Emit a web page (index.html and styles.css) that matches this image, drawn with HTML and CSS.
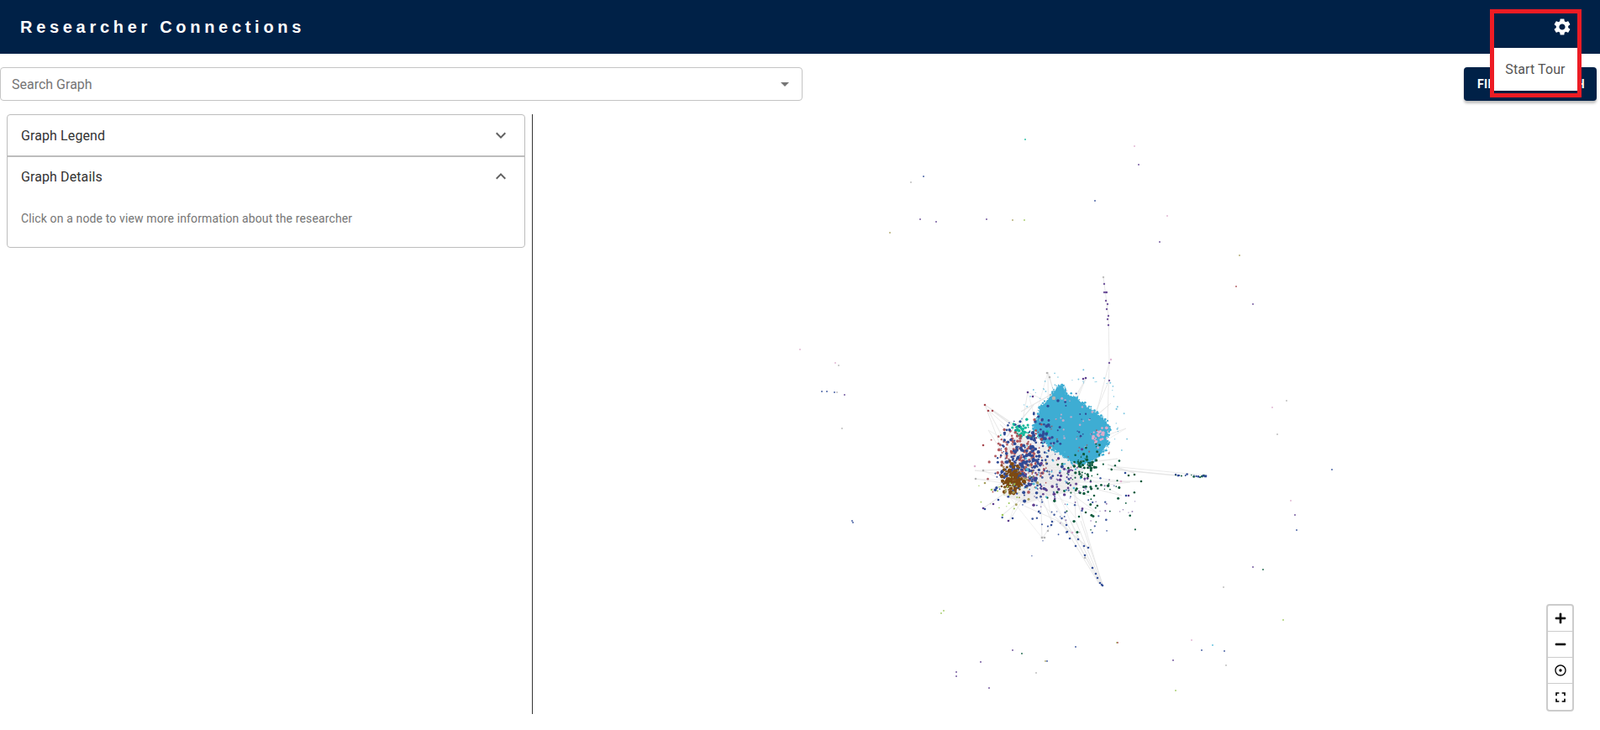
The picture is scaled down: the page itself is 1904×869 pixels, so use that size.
FILE: index.html
```html
<!DOCTYPE html>
<html lang="en">
<head>
    <meta charset="UTF-8">
    <title>Researcher Connections</title>
    <link rel="stylesheet" href="styles.css">
</head>
<body>
    <header class="topbar">
        <div class="title">Researcher Connections</div>
        <svg class="gear" viewBox="0 0 24 24"><path d="M19.14 12.94c.04-.3.06-.61.06-.94 0-.32-.02-.64-.07-.94l2.03-1.58c.18-.14.23-.41.12-.61l-1.92-3.32c-.12-.22-.37-.29-.59-.22l-2.39.96c-.5-.38-1.03-.7-1.62-.94l-.36-2.54c-.04-.24-.24-.41-.48-.41h-3.84c-.24 0-.43.17-.47.41l-.36 2.54c-.59.24-1.13.57-1.62.94l-2.39-.96c-.22-.08-.47 0-.59.22L2.74 8.87c-.12.21-.08.47.12.61l2.03 1.58c-.05.3-.09.63-.09.94s.02.64.07.94l-2.03 1.58c-.18.14-.23.41-.12.61l1.92 3.32c.12.22.37.29.59.22l2.39-.96c.5.38 1.03.7 1.62.94l.36 2.54c.05.24.24.41.48.41h3.84c.24 0 .44-.17.47-.41l.36-2.54c.59-.24 1.13-.56 1.62-.94l2.39.96c.22.08.47 0 .59-.22l1.92-3.32c.12-.22.07-.47-.12-.61l-2.01-1.58zM12 15.6c-1.98 0-3.6-1.62-3.6-3.6s1.62-3.6 3.6-3.6 3.6 1.62 3.6 3.6-1.62 3.6-3.6 3.6z"/></svg>
    </header>

    <!-- menu + tour highlight sit over the header -->
    <div class="menu">Start Tour</div>
    <div class="tour-box"></div>

    <div class="toolbar">
        <div class="search">
            <span>Search Graph</span>
            <svg viewBox="0 0 24 24"><path d="M7 10l5 5 5-5z"/></svg>
        </div>
        <button class="filter-btn">FILTER THE GRAPH</button>
    </div>

    <div class="content">
        <div class="sidebar">
            <div class="accordion">
                <div class="acc-head">
                    <span>Graph Legend</span>
                    <svg viewBox="0 0 24 24"><path d="M16.59 8.59 12 13.17 7.41 8.59 6 10l6 6 6-6z"/></svg>
                </div>
                <div class="acc-head acc-open">
                    <span>Graph Details</span>
                    <svg viewBox="0 0 24 24"><path d="m12 8-6 6 1.41 1.41L12 10.83l4.59 4.58L18 14z"/></svg>
                </div>
                <div class="acc-body">Click on a node to view more information about the researcher</div>
            </div>
        </div>

        <div class="graph">
            <canvas id="graph-canvas"></canvas>
            <div class="controls">
                <div class="ctrl"><svg class="big bold" viewBox="0 0 24 24"><path d="M19 13h-6v6h-2v-6H5v-2h6V5h2v6h6z"/></svg></div>
                <div class="ctrl"><svg class="big bold" viewBox="0 0 24 24"><path d="M19 13H5v-2h14z"/></svg></div>
                <div class="ctrl"><svg viewBox="0 0 24 24"><path d="M12 9.500a2.500 2.500 0 1 0 0 5 2.500 2.500 0 0 0 0-5zM12 2C6.480 2 2 6.480 2 12s4.480 10 10 10 10-4.480 10-10S17.520 2 12 2zm0 18c-4.420 0-8-3.580-8-8s3.580-8 8-8 8 3.580 8 8-3.580 8-8 8z"/></svg></div>
                <div class="ctrl"><svg class="big" viewBox="0 0 24 24"><path d="M7 14H5v5h5v-2H7v-3zm-2-4h2V7h3V5H5v5zm12 7h-3v2h5v-5h-2v3zM14 5v2h3v3h2V5h-5z"/></svg></div>
            </div>
        </div>
    </div>

    <script src="graph.js"></script>
</body>
</html>
```

FILE: styles.css
```css
* {
    box-sizing: border-box;
}

body {
    margin: 0;
    height: 869px;
    overflow: hidden;
    background: white;
    font-family: Roboto, "Liberation Sans", sans-serif;
    color: #212121;
}

.topbar {
    display: flex;
    justify-content: space-between;
    align-items: center;
    height: 64px;
    padding: 0 33px 0 24px;
    background: #002147;
}

.title {
    font-family: "Liberation Sans", Arial, sans-serif;
    font-size: 20px;
    font-weight: bold;
    letter-spacing: 4.7px;
    color: white;
}

.gear {
    width: 24px;
    height: 24px;
    fill: white;
}

.menu {
    position: absolute;
    top: 57px;
    right: 27px;
    z-index: 2;
    width: 100px;
    height: 51px;
    line-height: 51px;
    text-align: center;
    font-size: 16px;
    letter-spacing: 0.1px;
    color: #555;
    background: white;
    box-shadow: 0 2px 6px rgba(0,0,0,0.2);
}

.tour-box {
    position: absolute;
    top: 11px;
    right: 22px;
    z-index: 3;
    width: 109px;
    height: 105px;
    border: 5px solid #ed1c24;
}

.toolbar {
    display: flex;
    justify-content: space-between;
    align-items: center;
    padding: 16px 4px 0 0;
}

.search {
    display: flex;
    justify-content: space-between;
    align-items: center;
    width: 955px;
    height: 40px;
    padding: 0 8px 0 13px;
    border: 1px solid #c4c4c4;
    border-radius: 4px;
    font-size: 16px;
    color: #757575;
}

.search svg {
    width: 24px;
    height: 24px;
    fill: #757575;
}

.filter-btn {
    width: 158px;
    height: 40px;
    padding: 0 0 0 2px;
    border: none;
    border-radius: 4px;
    background: #002147;
    color: white;
    font-family: Roboto, sans-serif;
    font-size: 14px;
    font-weight: bold;
    letter-spacing: 0.3px;
    box-shadow: 0 3px 3px rgba(0,0,0,0.25);
}

.content {
    display: flex;
    height: 714px;
    margin-top: 16px;
}

.sidebar {
    width: 634px;
    padding: 0 8px;
    border-right: 1px solid #333;
}

.accordion {
    border: 1px solid #bdbdbd;
    border-radius: 4px;
}

.acc-head {
    display: flex;
    justify-content: space-between;
    align-items: center;
    height: 48px;
    padding: 0 16px;
    font-size: 16px;
    letter-spacing: 0.1px;
    color: #333;
}

.acc-head svg {
    width: 24px;
    height: 24px;
    fill: #616161;
}

.acc-open {
    border-top: 2px solid #bdbdbd;
}

.acc-body {
    padding: 17px 16px 24px;
    font-size: 14px;
    line-height: 20px;
    letter-spacing: 0.13px;
    color: #757575;
}

.graph {
    position: relative;
    flex: 1;
}

#graph-canvas {
    display: block;
    width: 100%;
    height: 100%;
}

.controls {
    position: absolute;
    right: 31px;
    bottom: 3px;
    width: 33px;
    border: 2px solid #ccc;
    border-radius: 4px;
    background: white;
}

.ctrl {
    display: flex;
    justify-content: center;
    align-items: center;
    height: 31px;
    border-bottom: 1px solid #ccc;
}

.ctrl:last-child {
    border-bottom: none;
}

.ctrl svg {
    width: 16px;
    height: 16px;
}

.ctrl svg.big {
    width: 20px;
    height: 20px;
}

.ctrl svg.bold {
    stroke: black;
    stroke-width: 1.1;
}
```

FILE: graph.js
```js
// network picture, coordinates are page pixels
const canvas = document.getElementById('graph-canvas');
const box = canvas.getBoundingClientRect();
canvas.width = box.width;
canvas.height = box.height;
const ctx = canvas.getContext('2d');
ctx.translate(-box.left, -box.top);

let seed = 1234;
function rnd() {
    seed = (seed * 16807) % 2147483647;
    return seed / 2147483647;
}
function gauss() {
    return rnd() + rnd() + rnd() - 1.5;
}

const BLUE = '#3eadd3', NAVY = '#2f4b96', RED = '#a8484f', BROWN = '#7d4a12',
      TEAL = '#12b89a', GREEN = '#0c5a3c', PURPLE = '#5e3f8f', PINK = '#dcaccc',
      GREY = '#b4b4b4', LIME = '#9cc85a', CYAN = '#4bb8d8', OLIVE = '#a8a060';

function dot(x, y, r, color, alpha) {
    ctx.globalAlpha = alpha === undefined ? 1 : alpha;
    ctx.fillStyle = color;
    ctx.beginPath();
    ctx.arc(x, y, r, 0, Math.PI * 2);
    ctx.fill();
    ctx.globalAlpha = 1;
}

function line(x1, y1, x2, y2, w) {
    ctx.strokeStyle = '#e6e6e6';
    ctx.lineWidth = w || 0.9;
    ctx.beginPath();
    ctx.moveTo(x1, y1);
    ctx.lineTo(x2, y2);
    ctx.stroke();
}

function cluster(cx, cy, sx, sy, n, color, rMin, rMax, alpha) {
    for (let i = 0; i < n; i++) {
        dot(cx + gauss() * sx, cy + gauss() * sy, rMin + rnd() * (rMax - rMin), color, alpha);
    }
}

// pale mass of edges below the blob
ctx.fillStyle = '#efeeee';
ctx.beginPath();
[[1235, 525], [1270, 545], [1290, 560], [1280, 585], [1250, 590], [1220, 600], [1195, 590], [1195, 540], [1215, 510]]
    .forEach((p, i) => i ? ctx.lineTo(p[0], p[1]) : ctx.moveTo(p[0], p[1]));
ctx.closePath();
ctx.fill();

// edges out to the loose nodes
const hub = [1235, 565];
[[1172, 482], [1177, 489], [1176, 512], [1160, 570], [1170, 560], [1170, 605], [1193, 613], [1201, 620],
 [1180, 583], [1240, 640], [1247, 443], [1292, 451], [1223, 467], [1270, 625], [1252, 622], [1283, 642],
 [1297, 590], [1345, 574], [1358, 573], [1335, 590], [1312, 697], [1305, 610], [1280, 617], [1322, 480],
 [1340, 510], [1330, 546], [1190, 505], [1160, 560]
].forEach(p => {
    line(hub[0] + gauss() * 40, hub[1] + gauss() * 30, p[0], p[1]);
    line(hub[0] + gauss() * 30, hub[1] + gauss() * 25, p[0], p[1], 0.6);
});
line(1181, 489, 1216, 515, 1.2);
line(1172, 482, 1206, 505, 1.2);
line(1247, 443, 1255, 470, 1.2);
line(1223, 467, 1250, 480, 0.8);
line(1292, 451, 1280, 480, 0.8);
line(1230, 482, 1198, 520, 1.2);
line(1250, 470, 1215, 490, 1.2);

// arms
line(1313, 330, 1319, 376);
line(1319, 376, 1320, 432);
line(1320, 432, 1305, 490);
line(1320, 432, 1318, 500);
line(1320, 452, 1300, 500);
line(1322, 555, 1435, 566, 0.8);
line(1318, 558, 1400, 566, 1.6);
line(1318, 553, 1350, 563, 1.6);
for (let i = 0; i < 5; i++) {
    line(1262 + i * 6, 620, 1308 + i, 695, 1);
}
line(1255, 620, 1240, 641);
line(1258, 620, 1295, 652, 1.2);

// main blue blob
const blob = [[1258, 462], [1263, 458], [1266, 462], [1268, 470], [1280, 473], [1292, 484], [1300, 489], [1312, 498],
    [1318, 505], [1320, 510], [1316, 522], [1318, 528], [1310, 540], [1300, 548], [1287, 553], [1277, 550],
    [1262, 540], [1248, 530], [1235, 518], [1231, 508], [1236, 495], [1238, 484], [1246, 478], [1252, 470]];
ctx.fillStyle = BLUE;
ctx.beginPath();
blob.forEach((p, i) => i ? ctx.lineTo(p[0], p[1]) : ctx.moveTo(p[0], p[1]));
ctx.closePath();
ctx.fill();
blob.forEach((p, i) => {
    const q = blob[(i + 1) % blob.length];
    const n = Math.ceil(Math.hypot(q[0] - p[0], q[1] - p[1]) * 1.5);
    for (let k = 0; k < n; k++) {
        const t = rnd();
        dot(p[0] + (q[0] - p[0]) * t + gauss() * 3, p[1] + (q[1] - p[1]) * t + gauss() * 3, 0.5 + rnd() * 0.9, BLUE);
    }
});
// stray blue nodes round the rim
for (let i = 0; i < 60; i++) {
    const a = rnd() * 6.283, r = 50 + rnd() * 16;
    const x = 1278 + Math.cos(a) * r, y = 505 + Math.sin(a) * r;
    if (y < 545) dot(x, y, 0.5 + rnd() * 0.6, BLUE, 0.7);
}

// things sitting on top of the blob
cluster(1308, 519, 9, 10, 24, PINK, 0.9, 2);
cluster(1275, 510, 42, 38, 26, PINK, 0.6, 1.6, 0.8);
cluster(1285, 525, 40, 28, 24, RED, 0.5, 1.2, 0.7);
cluster(1270, 500, 36, 40, 20, NAVY, 0.6, 1.7);
cluster(1297, 540, 22, 10, 16, GREEN, 0.6, 1.5);
dot(1259, 477, 1.8, NAVY);
dot(1240, 500, 1.8, NAVY);
dot(1249, 522, 1.7, PURPLE);
dot(1254, 474, 2.2, GREY);

// left side clusters
cluster(1216, 514, 22, 12, 30, TEAL, 0.7, 2);
cluster(1214, 512, 9, 8, 18, TEAL, 0.9, 1.9);
cluster(1237, 510, 12, 22, 24, NAVY, 1, 2.2);
cluster(1214, 545, 30, 34, 190, RED, 0.7, 2, 0.9);
cluster(1220, 545, 34, 38, 190, NAVY, 0.7, 2.1);
cluster(1205, 566, 20, 28, 50, NAVY, 0.8, 2.2);
cluster(1206, 568, 11, 20, 70, BROWN, 1, 2.3);
cluster(1204, 574, 10, 12, 50, BROWN, 1, 2.2);
cluster(1222, 565, 34, 40, 26, OLIVE, 0.7, 1.6);
cluster(1195, 590, 30, 20, 22, LIME, 0.5, 1.1);
cluster(1262, 568, 36, 28, 50, PURPLE, 0.8, 1.9);
cluster(1258, 595, 50, 50, 60, NAVY, 0.6, 1.5, 0.9);
cluster(1300, 580, 44, 44, 70, GREEN, 0.7, 1.7);
cluster(1292, 553, 22, 6, 26, GREEN, 0.9, 1.9);
cluster(1250, 565, 40, 28, 28, CYAN, 0.6, 1.5);
cluster(1295, 590, 50, 44, 26, PURPLE, 0.5, 1.1, 0.7);

// outliers around the core
[[1172, 482, RED], [1176, 489, RED], [1181, 489, RED], [1161, 570, GREY], [1170, 560, GREY],
 [1172, 606, NAVY], [1170, 605, PURPLE], [1200, 620, PURPLE], [1205, 617, NAVY], [1193, 613, LIME],
 [1180, 583, LIME], [1246, 444, GREY], [1249, 449, GREY], [1289, 451, PURPLE], [1292, 450, PURPLE],
 [1223, 467, PURPLE], [1229, 472, PURPLE], [1250, 470, GREY], [1339, 563, NAVY], [1350, 565, GREEN],
 [1343, 566, GREEN], [1358, 573, GREEN], [1343, 590, PURPLE], [1334, 573, PINK], [1340, 590, NAVY],
 [1243, 640, GREY], [1240, 640, GREY], [1284, 615, GREEN], [1292, 610, GREEN], [1302, 590, GREEN],
 [1170, 530, RED], [1160, 555, PINK], [1182, 600, PURPLE], [1188, 595, NAVY], [1172, 575, OLIVE]
].forEach(p => dot(p[0], p[1], 1.3, p[2]));

// top arm
[[1313, 330, GREY], [1314, 338, PURPLE], [1314, 348, PURPLE], [1316, 358, PURPLE], [1317, 348, PURPLE],
 [1316, 348, PURPLE], [1318, 362, PURPLE], [1317, 368, PURPLE], [1318, 380, PURPLE], [1319, 387, PURPLE],
 [1319, 376, PURPLE], [1322, 428, PINK], [1320, 432, PURPLE], [1320, 453, PURPLE]
].forEach(p => dot(p[0], p[1], 1.2, p[2], 0.85));

// right arm
for (let i = 0; i < 22; i++) {
    dot(1398 + rnd() * 38, 566 + gauss() * 2, 0.6 + rnd() * 0.8, i % 3 ? NAVY : GREEN);
}

// bottom arm
[[1252, 621, NAVY], [1251, 625, NAVY], [1269, 625, NAVY], [1270, 633, NAVY], [1273, 641, NAVY], [1283, 642, NAVY],
 [1280, 650, NAVY], [1290, 650, NAVY], [1295, 652, NAVY], [1291, 661, NAVY], [1291, 664, GREY],
 [1300, 676, NAVY], [1304, 683, NAVY], [1306, 688, NAVY], [1309, 694, NAVY], [1311, 696, NAVY], [1312, 697, NAVY],
 [1240, 640, GREY], [1247, 632, GREY], [1276, 634, PINK]
].forEach(p => dot(p[0], p[1], 1.3, p[2], 0.95));

// far away single nodes, around the page
[[1220, 166, TEAL], [1350, 174, PINK], [1355, 196, PURPLE], [1099, 210, NAVY], [1084, 217, GREY],
 [1095, 261, PURPLE], [1114, 264, PURPLE], [1174, 261, PURPLE], [1205, 262, OLIVE], [1219, 262, LIME],
 [1059, 277, OLIVE], [1303, 239, NAVY], [1389, 257, PINK], [1380, 288, PURPLE], [1475, 304, OLIVE],
 [1471, 341, RED], [1491, 362, PURPLE], [952, 416, PINK], [994, 432, PINK], [998, 435, GREY],
 [978, 466, NAVY], [984, 466, NAVY], [993, 467, NAVY], [996, 467, GREY], [1005, 470, PURPLE],
 [1002, 510, GREY], [1531, 477, GREY], [1514, 485, PINK], [1520, 517, GREY], [1585, 559, NAVY],
 [1536, 596, PINK], [1541, 613, PURPLE], [1543, 631, NAVY], [1014, 620, NAVY], [1015, 622, NAVY],
 [1491, 675, PURPLE], [1503, 678, GREEN], [1456, 699, GREY], [1527, 738, LIME], [1123, 727, LIME],
 [1120, 730, LIME], [1329, 765, LIME], [1280, 770, NAVY], [1418, 762, PINK], [1430, 774, NAVY],
 [1443, 768, CYAN], [1457, 775, NAVY], [1396, 786, PURPLE], [1459, 792, GREY], [1205, 774, PURPLE],
 [1216, 778, GREEN], [1244, 787, OLIVE], [1167, 788, PURPLE], [1246, 787, NAVY], [1138, 800, PURPLE],
 [1138, 805, PURPLE], [1233, 801, GREY], [1177, 819, PURPLE], [1399, 822, LIME], [1330, 765, RED]
].forEach(p => dot(p[0], p[1], 1, p[2], 0.85));
```
